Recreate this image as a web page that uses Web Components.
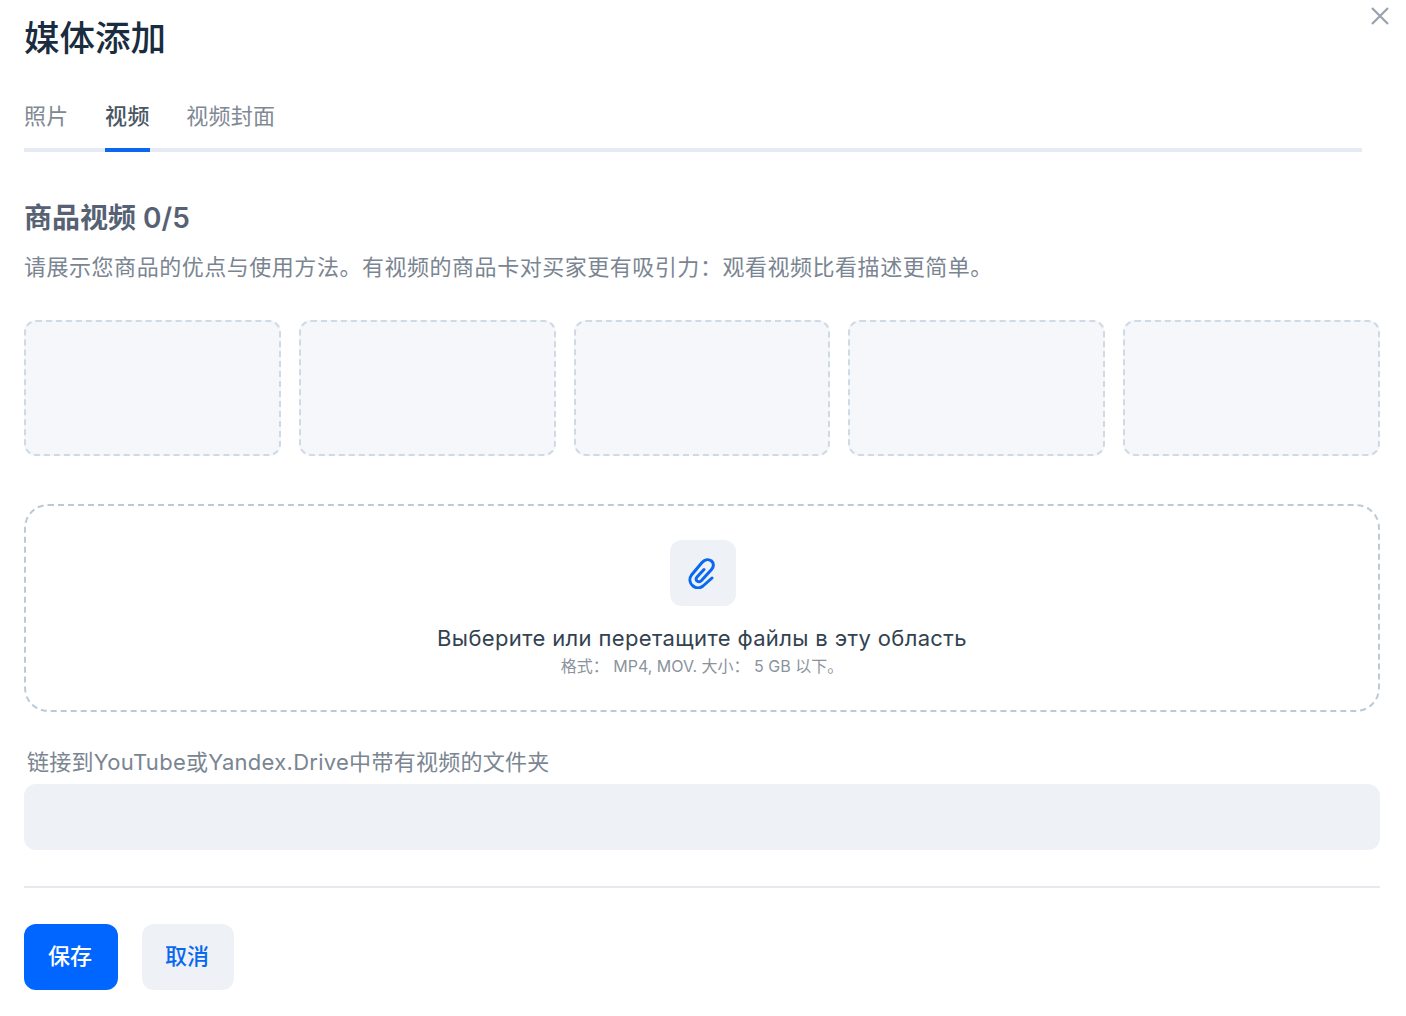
<!DOCTYPE html>
<html>
<head>
<meta charset="utf-8">
<style>
  html, body { margin: 0; background: #fff; }
  body { font-family: Inter, "Noto Sans CJK SC", sans-serif; color: #1a2b3c; }
</style>
</head>
<body>
<media-dialog>
  <span slot="title">媒体添加</span>
  <media-tabs slot="tabs"></media-tabs>
  <video-section></video-section>
  <upload-area></upload-area>
  <link-field></link-field>
  <dialog-actions slot="footer"></dialog-actions>
</media-dialog>

<script>
  class MediaDialog extends HTMLElement {
    constructor() {
      super();
      this.attachShadow({ mode: 'open' });
      this.shadowRoot.innerHTML = `
        <style>
          :host { display: block; position: relative; box-sizing: border-box; width: 1406px; height: 1016px; padding: 15px 26px 0 24px; overflow: hidden; }
          h1 { margin: 0; font-size: 35.5px; line-height: 48px; font-weight: 500; color: #1a2c40; }
          .close { position: absolute; top: 6px; right: 16px; width: 20px; height: 20px; padding: 0; border: 0; background: none; }
          .close svg { display: block; }
          footer { margin-top: 36px; padding-top: 36px; border-top: 2px solid #e6eaef; }
        </style>
        <h1><slot name="title"></slot></h1>
        <button class="close" aria-label="close">
          <svg width="20" height="20" viewBox="0 0 20 20" fill="none" stroke="#98a2ae" stroke-width="2.2">
            <path d="M2 2 18 18M18 2 2 18"/>
          </svg>
        </button>
        <slot name="tabs"></slot>
        <slot></slot>
        <footer><slot name="footer"></slot></footer>
      `;
    }
  }

  class MediaTabs extends HTMLElement {
    constructor() {
      super();
      this.attachShadow({ mode: 'open' });
      this.shadowRoot.innerHTML = `
        <style>
          :host { display: flex; gap: 36.5px; width: 1338px; margin-top: 37px; border-bottom: 4px solid #e6ebf3; }
          span { display: block; height: 48px; margin-bottom: -4px; border-bottom: 4px solid transparent; font-size: 22px; line-height: 32px; letter-spacing: .3px; color: #7f8994; }
          .on { color: #4a5662; font-weight: 500; border-bottom-color: #0a68f0; }
        </style>
        <span>照片</span><span class="on">视频</span><span>视频封面</span>
      `;
    }
  }

  class VideoSection extends HTMLElement {
    constructor() {
      super();
      this.attachShadow({ mode: 'open' });
      this.shadowRoot.innerHTML = `
        <style>
          :host { display: block; width: 1356px; margin-top: 46px; }
          h2 { margin: 0; font-size: 28px; line-height: 40px; font-weight: 600; color: #566273; }
          p { margin: 12px 0 0; font-size: 22px; line-height: 34px; letter-spacing: .53px; color: #7a8591; }
          .slots { display: grid; grid-template-columns: repeat(5, 1fr); gap: 18px; margin-top: 36px; }
          .slots div { box-sizing: border-box; height: 136px; border: 2px dashed #d0dae4; border-radius: 12px; background: #f5f7fb; }
        </style>
        <h2>商品视频 0/5</h2>
        <p>请展示您商品的优点与使用方法。有视频的商品卡对买家更有吸引力：观看视频比看描述更简单。</p>
        <div class="slots"><div></div><div></div><div></div><div></div><div></div></div>
      `;
    }
  }

  class UploadArea extends HTMLElement {
    constructor() {
      super();
      this.attachShadow({ mode: 'open' });
      this.shadowRoot.innerHTML = `
        <style>
          :host { display: flex; flex-direction: column; align-items: center; box-sizing: border-box; width: 1356px; height: 208px; margin-top: 48px; padding-top: 34px; border: 2px dashed #bccad6; border-radius: 24px; }
          .icon { display: flex; align-items: center; justify-content: center; width: 66px; height: 66px; margin-left: 2px; border-radius: 12px; background: #eef1f5; }
          .icon svg { margin-right: 4px; }
          .main { margin-top: 18px; font-size: 22px; line-height: 28px; letter-spacing: .36px; color: #33424f; }
          .hint { margin-top: 3px; font-size: 16px; line-height: 22px; color: #8a939d; }
        </style>
        <div class="icon">
          <svg width="30" height="32" viewBox="0 0 30 32" fill="none" stroke="#0a68f0" stroke-width="3" stroke-linecap="round" stroke-linejoin="round">
            <path d="M26 21 17 29C14 31.500 10 31.500 7 29 3.500 26 3 21.500 5.500 18L16 5.500C19 2 23 2 25.500 4 28 6 28 9.500 25.500 12.500L15.500 23.500C14 25 12 25 11 24 9.800 23 9.800 21.200 11 20L18 12.500"/>
          </svg>
        </div>
        <div class="main">Выберите или перетащите файлы в эту область</div>
        <div class="hint">格式： MP4, MOV. 大小： 5 GB 以下。</div>
      `;
    }
  }

  class LinkField extends HTMLElement {
    constructor() {
      super();
      this.attachShadow({ mode: 'open' });
      this.shadowRoot.innerHTML = `
        <style>
          :host { display: block; width: 1356px; margin-top: 34px; }
          label { display: block; padding-left: 3px; font-size: 22px; line-height: 32px; letter-spacing: .28px; color: #7a8591; }
          .input { height: 66px; margin-top: 6px; border-radius: 12px; background: #eef1f5; }
        </style>
        <label>链接到YouTube或Yandex.Drive中带有视频的文件夹</label>
        <div class="input"></div>
      `;
    }
  }

  class DialogActions extends HTMLElement {
    constructor() {
      super();
      this.attachShadow({ mode: 'open' });
      this.shadowRoot.innerHTML = `
        <style>
          :host { display: flex; gap: 24px; }
          button { height: 66px; padding: 0 25px 6px 23px; border: 0; border-radius: 12px; font: 500 22px Inter, "Noto Sans CJK SC", sans-serif; }
          .save { padding: 0 26px 6px 24px; background: #0066ff; color: #fff; }
          .cancel { background: #eef1f5; color: #0a68f0; }
        </style>
        <button class="save">保存</button>
        <button class="cancel">取消</button>
      `;
    }
  }

  customElements.define('media-dialog', MediaDialog);
  customElements.define('media-tabs', MediaTabs);
  customElements.define('video-section', VideoSection);
  customElements.define('upload-area', UploadArea);
  customElements.define('link-field', LinkField);
  customElements.define('dialog-actions', DialogActions);
</script>
</body>
</html>
